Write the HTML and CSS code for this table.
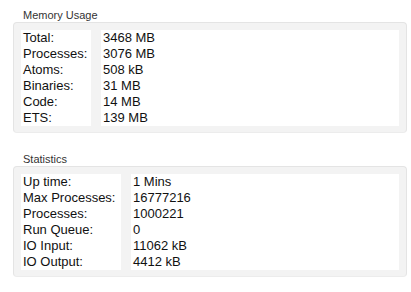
FILE: index.html
```html
<!DOCTYPE html>
<html lang="en">
<head>
  <meta charset="UTF-8">
  <title>System Info</title>
  <link rel="stylesheet" href="styles.css">
</head>
<body>
  <div class="panel">
    <section class="group">
      <div class="group-title">Memory Usage</div>
      <div class="group-box">
        <div class="info-table memory">
          <div class="keys">
            <div>Total:</div>
            <div>Processes:</div>
            <div>Atoms:</div>
            <div>Binaries:</div>
            <div>Code:</div>
            <div>ETS:</div>
          </div>
          <div class="values">
            <div>3468 MB</div>
            <div>3076 MB</div>
            <div>508 kB</div>
            <div>31 MB</div>
            <div>14 MB</div>
            <div>139 MB</div>
          </div>
        </div>
      </div>
    </section>

    <section class="group">
      <div class="group-title">Statistics</div>
      <div class="group-box">
        <div class="info-table stats">
          <div class="keys">
            <div>Up time:</div>
            <div>Max Processes:</div>
            <div>Processes:</div>
            <div>Run Queue:</div>
            <div>IO Input:</div>
            <div>IO Output:</div>
          </div>
          <div class="values">
            <div>1 Mins</div>
            <div>16777216</div>
            <div>1000221</div>
            <div>0</div>
            <div>11062 kB</div>
            <div>4412 kB</div>
          </div>
        </div>
      </div>
    </section>
  </div>
</body>
</html>
```

FILE: styles.css
```css
* {
  margin: 0;
  padding: 0;
  box-sizing: border-box;
}

body {
  font-family: "Liberation Sans", Arial, sans-serif;
  background: #ffffff;
  color: #111;
}

.panel {
  padding: 9px 4px 0 13px;
}

.group + .group {
  margin-top: 20px;
}

.group-title {
  font-size: 11px;
  line-height: 13px;
  color: #333;
  padding-left: 10px;
}

.group-box {
  background: #f3f3f3;
  border: 1px solid #e4e4e4;
  border-bottom-color: #ececec;
  border-radius: 4px;
  padding: 7px 7px 6px 7px;
}

.info-table {
  display: grid;
  column-gap: 10px;
  font-size: 13px;
  line-height: 16px;
}

.info-table.memory {
  grid-template-columns: 70px 1fr;
}

.info-table.stats {
  grid-template-columns: 100px 1fr;
}

.keys,
.values {
  background: #ffffff;
  padding-left: 2px;
}
```
